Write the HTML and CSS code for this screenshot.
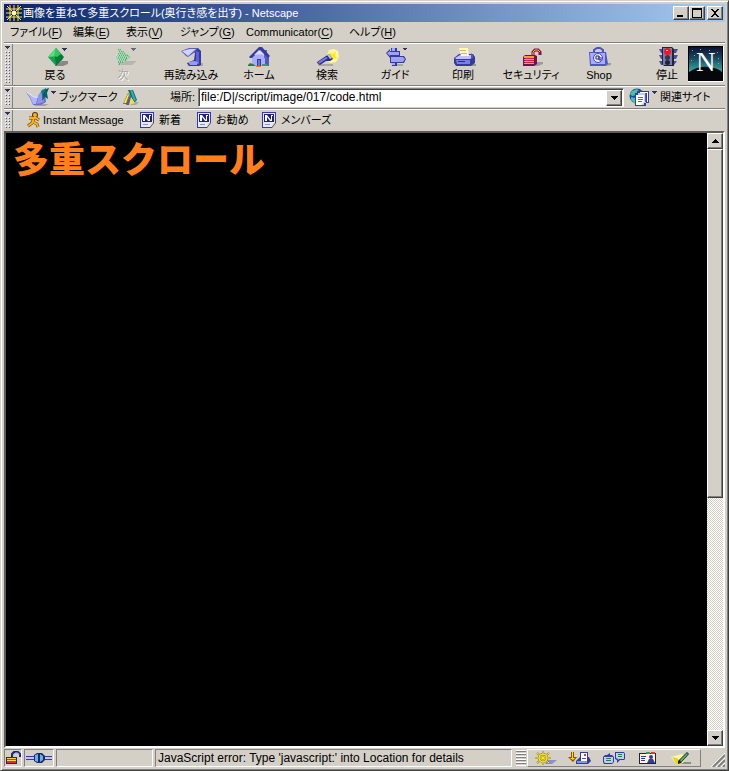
FILE: index.html
```html
<!DOCTYPE html>
<html lang="ja">
<head>
<meta charset="utf-8">
<meta name="viewport" content="width=device-width, initial-scale=1">
<title>画像を重ねて多重スクロール(奥行き感を出す) - Netscape</title>
<link rel="stylesheet" href="styles.css">
</head>
<body>
<svg class="defs" aria-hidden="true">
  <symbol id="page" viewBox="0 0 14 16"><path d="M0 0h14v11l-4 5H0z" fill="#3438b8"/><path d="M1 1h12v10h-3v4H1z" fill="#e8e8ff"/><path d="M2 2h10v8H2z" fill="#20246c"/><path d="M3 9V3h2l4 5V3h2v1h-1v5H8L5 5v4z" fill="#fff"/><path d="M3 12h5v1H3z" fill="#8890d8"/><path d="M10 11h3l-3 4z" fill="#ffe87c"/></symbol>
  <symbol id="drop" viewBox="0 0 5 3"><path d="M0 0h5v1H4v1H3v1H2V2H1V1H0z" fill="#303060"/></symbol>
</svg>
<div class="window">
  <header class="titlebar">
    <svg class="app-icon" viewBox="0 0 16 16"><path d="M0 0h16v16H0z" fill="#101858"/><path d="M8 0v16M0 8h16M1 1l14 14M15 1L1 15M0 4h16M0 12h16M4 0v16M12 0v16" stroke="#ffe94a"/><path d="M7 6h2v1h1v2H9v1H7V9H6V7h1z" fill="#fffbd0"/></svg>
    <h1 class="title">画像を重ねて多重スクロール(奥行き感を出す) - Netscape</h1>
    <div class="controls">
      <button class="box" aria-label="最小化"><svg viewBox="0 0 12 10"><path d="M2 7h6v2H2z"/></svg></button>
      <button class="box" aria-label="最大化"><svg viewBox="0 0 12 10"><path d="M1 0h10v10H1zM2 2v7h8V2z" fill-rule="evenodd"/></svg></button>
      <button class="box close" aria-label="閉じる"><svg viewBox="0 0 12 10"><path d="M2 1h2v1h1v1h2V2h1V1h2v1H9v1H8v1H7v2h1v1h1v1h1v1H8V8H7V7H5v1H4v1H2V8h1V7h1V6h1V4H4V3H3V2H2z"/></svg></button>
    </div>
  </header>

  <nav class="menu">
    <button>ファイル(<u>F</u>)</button>
    <button>編集(<u>E</u>)</button>
    <button>表示(<u>V</u>)</button>
    <button>ジャンプ(<u>G</u>)</button>
    <button>Communicator(<u>C</u>)</button>
    <button>ヘルプ(<u>H</u>)</button>
  </nav>

  <div class="bar navigation">
    <button class="grip" aria-label="ツールバー"><svg><use href="#drop"/></svg></button>
    <div class="tools">
      <button class="tool"><svg viewBox="0 0 24 20"><path d="M12 18l7-4h6v3l-5 2h-8z" fill="#8a8884"/><path d="M13 1v18L5 10z" fill="#18a050"/><path d="M13 1l2 8-10 1z" fill="#58e078"/><path d="M13 1l8 9-2 3-6 6-1-9z" fill="#087838"/><path d="M13 1l5 6-4 3-3-1z" fill="#30c860"/><path d="M19 1h5v1h-1v1h-1v1h-1V3h-1V2h-1z" fill="#303060"/></svg>戻る</button>
      <button class="tool disabled" disabled><svg viewBox="0 0 24 20"><path d="M9 18l5-4h12l-5 4z" fill="#b8b5ae"/><path d="M7 1l13 9-13 9 1-5-4-4 4-4z" fill="#8fd0a0"/><path d="M7 3h1m1 0h1M8 5h1m1 0h1m1 0h1M7 7h1m1 0h1m1 0h1m1 0h1M8 9h1m1 0h1m1 0h1m1 0h1m1 0h1M7 11h1m1 0h1m1 0h1m1 0h1m1 0h1M8 13h1m1 0h1m1 0h1m1 0h1M7 15h1m1 0h1m1 0h1M8 17h1" stroke="#1c8c4c"/><path d="M7 4h1m1 0h1M8 6h1m1 0h1m1 0h1M5 8h1m1 0h1m1 0h1m1 0h1m1 0h1M4 10h1m1 0h1m1 0h1m1 0h1m1 0h1m1 0h1m1 0h1M7 12h1m1 0h1m1 0h1m1 0h1M8 14h1m1 0h1m1 0h1" stroke="#e0eee0"/><path d="M20 1h5v1h-1v1h-1v1h-1V3h-1V2h-1z" fill="#686874"/></svg>次</button>
      <button class="tool"><svg viewBox="0 0 24 20"><path d="M8 16h16v3H9z" fill="#aaa7a0"/><path d="M10 1h9l3 3v14l-2 1H10l-2-3 7-3 1-7z" fill="#343b9c"/><path d="M17 4l3 1v12h-4l1-5z" fill="#5c62d8"/><path d="M2 4l8-3h9l-3 4-7 5-2-1z" fill="#5c62b8"/><path d="M3 4l8-2h6l-8 7z" fill="#d0d3ff"/><path d="M9 15l6-1 4 1-1 3h-7z" fill="#989cf4"/></svg>再読み込み</button>
      <button class="tool"><svg viewBox="0 0 24 20"><path d="M17 8h5v11h-6z" fill="#5358b8"/><path d="M5 10l6-6 7 6v9H5z" fill="#aaaefa"/><path d="M17 3h3v8h-3z" fill="#5d62c6"/><path d="M2 10L12 0h3l8 9-2 2-8-8-8 8H3z" fill="#343b9c"/><path d="M7 8l5-5 4 4z" fill="#d8daff"/><path d="M10 12h4v7h-4z" fill="#343b9c"/><path d="M11 13h2v6h-2z" fill="#696fe0"/><path d="M1 18l2-2 3 1 3 2H1z" fill="#168444"/><path d="M9 19h5v1H9z" fill="#e87530"/><path d="M15 17h4l3 2h-7z" fill="#36a060"/></svg>ホーム</button>
      <button class="tool"><svg viewBox="0 0 24 20"><path d="M12 8l2-5 5-1 4 2 1 6-3 5-6 1-4-3z" fill="#fff8a0"/><path d="M14 5l4 2 3-3-1 5 3 2-5 1-3 2z" fill="#ffe824"/><path d="M4 17h14v2H3z" fill="#aaa7a0"/><path d="M2 15l9-6 3-2 4 5-3 2h-4l-6 4-2-1z" fill="#292d80"/><path d="M3 15l8-5 2 1-9 6z" fill="#777de0"/><path d="M12 8l2-1 3 4-2 1z" fill="#b8bcff"/></svg>検索</button>
      <button class="tool"><svg viewBox="0 0 24 20"><path d="M9 17h11v2H9z" fill="#aaa7a0"/><path d="M8 1h6v18H9z" fill="#343b9c"/><path d="M9 1h3v17H9z" fill="#a5a9f5"/><path d="M3 6l4-4v2h10v5H7v2z" fill="#343b9c"/><path d="M4 6l3-2v1h9v3H7v1z" fill="#9da2f5"/><path d="M7 9h14l2 3-2 4H7z" fill="#343b9c"/><path d="M8 10h12l2 2-2 3H8z" fill="#9da2f5"/><path d="M20 1h4v1h-1v1h-2V2h-1z" fill="#303060"/></svg>ガイド</button>
      <button class="tool"><svg viewBox="0 0 24 20"><path d="M7 17h18v2H9z" fill="#99968f"/><path d="M3 11l5-4h14l2 3v6l-4 3H5l-2-3z" fill="#343b9c"/><path d="M4 11l5-3h11l2 2-3 2H5z" fill="#bfc2ff"/><path d="M5 13h14v4H6z" fill="#7a80e2"/><path d="M8 1h9l1 8H10z" fill="#fff9cf"/><path d="M9 3h6v1H9zm1 3h6v1h-6z" fill="#dfb060"/><path d="M20 6l2 2v3l-2 1z" fill="#5157b8"/><path d="M7 14h7v1H7z" fill="#252a80"/></svg>印刷</button>
      <button class="tool"><svg viewBox="0 0 24 20"><path d="M15 15h9v2l-5 2h-5z" fill="#9e9b94"/><path d="M14 9V5l2-2h3l2 2v3" fill="none" stroke="#7d1740" stroke-width="3"/><path d="M14 8V5l2-2h3l2 2" fill="none" stroke="#ffb050"/><path d="M4 10l2-2h10l2 1v8l-3 2H4z" fill="#69164c"/><path d="M5 9h10v2H5zm0 3h10v1H5zm0 2h10v1H5zm0 2h10v1H5z" fill="#ff9b39"/><path d="M6 11h9v1H6zm0 2h9v1H6zm0 2h9v1H6z" fill="#c72452"/></svg>セキュリティ</button>
      <button class="tool"><svg viewBox="0 0 24 20"><path d="M7 16h17v2l-5 1H6z" fill="#9e9b94"/><path d="M7 6V3l3-2h3l3 2v4" fill="none" stroke="#4b52c0" stroke-width="2"/><path d="M2 5h17l2 12-3 2H3z" fill="#5057c4"/><path d="M3 6h15v11H4z" fill="#a8adff"/><circle cx="11" cy="11" r="4.5" fill="#eeeeff" stroke="#4148b4"/><path d="M12 9H9v3h3V9v4h2v-3" fill="none" stroke="#292d80"/></svg>Shop</button>
      <button class="tool stop"><svg viewBox="0 0 24 20"><path d="M4 2h5v4H6zM4 8h5v4H6zM4 14h5v4H6zM17 2h6l-2 4h-4zM17 8h6l-2 4h-4zM17 14h5l-3 4h-2z" fill="#4a5096"/><path d="M7 0h10l2 2v17H9l-2-2z" fill="#20233c"/><path d="M8 1h9v17H8z" fill="#777cae"/><circle cx="12.500" cy="4.500" r="3.500" fill="#f01820"/><path d="M11 3h2v1h-2z" fill="#ffabab"/><circle cx="12.500" cy="10.500" r="2.500" fill="#33364c"/><circle cx="12.500" cy="15.500" r="2.500" fill="#202337"/></svg>停止</button>
    </div>
    <a class="logo" href="#" aria-label="Netscape"><svg viewBox="0 0 36 36"><defs><linearGradient id="sky" x2="0" y2="1"><stop offset="0" stop-color="#0c1030"/><stop offset=".35" stop-color="#1a4a60"/><stop offset=".75" stop-color="#3aaca4"/></linearGradient></defs><path d="M0 0h36v36H0z"/><path d="M1 1h33v33H1z" fill="url(#sky)"/><path d="M1 26Q10 20 20 21T34 26v8H1z" fill="#05070c"/><path d="M4 4h1v1H4zm25 2h1v1h-1zM6 9h1v1H6zm24 3h1v1h-1zM21 4h1v1h-1zM3 14h1v1H3zm27 3h1v1h-1zM12 3h1v1h-1z" fill="#7fa8b8"/><text x="8" y="25" class="logo-letter">N</text><path d="M35 0h1v36H0v-1h35z" fill="#fff"/></svg></a>
  </div>

  <div class="bar location">
    <button class="grip" aria-label="ツールバー"><svg><use href="#drop"/></svg></button>
    <button class="bookmark"><svg class="i24" viewBox="0 0 24 18"><path d="M8 16h15l-4 2H9z" fill="#a5a29b"/><path d="M0 4l7 4h5l5-7 2 3 1 10-5 3H7l-3-7z" fill="#6a70cc"/><path d="M0 4l7 4h5l-2 8H7l-3-7z" fill="#b0b4fa"/><path d="M12 8l4-6 2 12-7 2z" fill="#9094ec"/><path d="M15 3l5-3v6l-3 5z" fill="#087f76"/><path d="M20 1l3-1-2 5 1 6-3-2-3 4 1-7z" fill="#0a5c70"/><path d="M1 4l7 5h4" fill="none" stroke="#f0f0ff"/></svg><svg class="drop"><use href="#drop"/></svg>ブックマーク</button>
    <button class="quick" aria-label="クイックファイル"><svg viewBox="0 0 16 18"><path d="M5 14h11l-3 3H5z" fill="#aaa7a0"/><path d="M5 2h5l4 10-3 3-3-6z" fill="#086c79"/><path d="M7 2h2l4 10-2 1z" fill="#38b0a0"/><path d="M5 5l2 2-3 9H0z" fill="#7a7408"/><path d="M5 6l1 1-3 8H1z" fill="#fff04a"/><path d="M7 7l2 2-3 8H3z" fill="#5157b8"/><path d="M8 9l4 6-6 2z" fill="#f3df44"/></svg></button>
    <label for="address">場所:</label>
    <div class="combo"><input id="address" type="text" value="file:/D|/script/image/017/code.html"><button class="box" aria-label="履歴"><svg viewBox="0 0 7 4"><path d="M0 0h7v1H6v1H5v1H4v1H3V3H2V2H1V1H0z"/></svg></button></div>
    <button class="related"><svg class="i22" viewBox="0 0 22 18"><circle cx="8" cy="8" r="7.500" fill="#1748b8"/><path d="M3 3l5-2 2 2-3 4-4 1-2-2zM2 9l4 1 2 4-2 2-4-4zM12 2l3 4-4 1z" fill="#46c49c"/><path d="M8 3h12v12h-3v3H6V5h2z" fill="#373d91"/><path d="M11 4h8v10h-1V5h-7z" fill="#fff"/><path d="M9 5h8v10H9zM7 7h8v10H7z" fill="#c5c8f2"/><path d="M7 7h8v7l-3 3H7z" fill="#fff"/><path d="M9 9h5v1H9zm0 2h5v1H9zm0 2h4v1H9zM16 5h1v9h-1z" fill="#5a60ba"/></svg><svg class="drop"><use href="#drop"/></svg>関連サイト</button>
  </div>

  <div class="bar personal">
    <button class="grip" aria-label="ツールバー"><svg><use href="#drop"/></svg></button>
    <div class="links">
      <a class="aim" href="#"><svg viewBox="0 0 14 16"><path d="M2 6h7l3 2M7 6l-2 5-4 3M6 10l4 2 1 3" fill="none" stroke="#5c3400" stroke-width="3"/><circle cx="8" cy="3" r="3" fill="#5c3400"/><circle cx="8" cy="3" r="2" fill="#f9b024"/><path d="M2 6h7l3 2M7 6l-2 5-4 3M6 10l4 2 1 3" fill="none" stroke="#f9b024" stroke-width="2"/></svg>Instant Message</a>
      <a href="#"><svg><use href="#page"/></svg>新着</a>
      <a href="#"><svg><use href="#page"/></svg>お勧め</a>
      <a href="#"><svg><use href="#page"/></svg>メンバーズ</a>
    </div>
  </div>

  <div class="view">
    <main><h2>多重スクロール</h2></main>
    <div class="scrollbar">
      <button class="box" aria-label="上へ"><svg viewBox="0 0 7 4"><path d="M3 0h1v1h1v1h1v1h1v1H0V3h1V2h1V1h1z"/></svg></button>
      <div class="track"><div class="thumb"></div></div>
      <button class="box" aria-label="下へ"><svg viewBox="0 0 7 4"><path d="M0 0h7v1H6v1H5v1H4v1H3V3H2V2H1V1H0z"/></svg></button>
    </div>
  </div>

  <footer class="status">
    <button class="cell lock" aria-label="セキュリティ情報"><svg viewBox="0 0 16 14"><path d="M7 7V3l2-2h4l2 2v3" fill="none" stroke="#20266c" stroke-width="2"/><path d="M8 5l2-3h3l1 2" fill="none" stroke="#a5a9f5"/><path d="M1 6h11v7H1z" fill="#38205c"/><path d="M2 7h9v5H2z" fill="#ffd34b"/><path d="M2 8h9v1H2zm0 2h9v2H2z" fill="#d8285b"/></svg></button>
    <div class="cell plug"><svg viewBox="0 0 26 12"><path d="M0 4h8v4H0zM18 4h8v4h-8z" fill="#343b9c"/><path d="M0 5h8v2H0zM18 5h8v2h-8z" fill="#bfc2ff"/><path d="M8 3l3-2h5l3 3v4l-3 3h-5L8 9z" fill="#20266c"/><path d="M9 3l3-1v8l-3-1zM14 2l3 2v4l-3 2z" fill="#67aef3"/></svg></div>
    <div class="cell progress"></div>
    <div class="cell message">JavaScript error: Type 'javascript:' into Location for details</div>
    <div class="component-grip"></div>
    <div class="components">
      <button aria-label="Navigator"><svg viewBox="0 0 24 14"><path d="M13 9h10l-5 4h-7z" fill="#8b90cc"/><path d="M9 0v14M1 7h16M3 2l12 10M15 2L3 12" stroke="#8c8420" stroke-width="2"/><circle cx="9" cy="7" r="4" fill="none" stroke="#8c8420" stroke-width="2"/><path d="M9 0v14M1 7h16M3 2l12 10M15 2L3 12" stroke="#ffe43a"/><circle cx="9" cy="7" r="4" fill="none" stroke="#ffe43a"/></svg></button>
      <button aria-label="Mail"><svg viewBox="0 0 24 14"><path d="M3 1h3v5h3l-4 5-5-5h3z" fill="#8a5400"/><path d="M4 1h1v6h2L5 9 2 7h2z" fill="#ffdc24"/><path d="M8 10l4-4h9l2 4-3 3H8z" fill="#343b9c"/><path d="M9 10h10v2H9z" fill="#8c90ed"/><path d="M12 1h8v9h-8z" fill="#343b9c"/><path d="M13 2h6v8h-6z" fill="#fff"/><path d="M16 3h2v2h-2z" fill="#e33333"/><path d="M14 7h4v1h-4z" fill="#5157b8"/></svg></button>
      <button aria-label="Discussions"><svg viewBox="0 0 24 14"><path d="M1 6l2-2h2l3-2v2h2l2 2v5l-2 2H2l-1-2zM13 1h9l1 2v5l-1 1h-4l-3 3V9l-2-1z" fill="#343b9c"/><path d="M2 6h9v5l-1 1H3l-1-1zM14 2h8v6h-5l-1 1V8l-2-1z" fill="#c6c9ff"/><path d="M4 7h5v1H4zm0 2h5v1H4zm12-6h4v1h-4zm0 2h4v1h-4z" fill="#168444"/></svg></button>
      <button aria-label="Address Book"><svg viewBox="0 0 24 14"><path d="M3 2h17v11H3z" fill="#202040"/><path d="M4 3h15v9H4z" fill="#fff8cf"/><path d="M10 1h4v2h-4z" fill="#24a45c"/><path d="M15 1h4v2h-4z" fill="#e33333"/><path d="M5 5h5v1H5zm0 2h4v1H5zm0 2h4v1H5z" fill="#343b9c"/><circle cx="15" cy="6" r="2" fill="#343b9c"/><path d="M11 12l2-4h4l2 4z" fill="#343b9c"/></svg></button>
      <button aria-label="Composer"><svg viewBox="0 0 24 14"><path d="M7 11h14v2H8z" fill="#8e8c86"/><path d="M1 6l11-3 4 3-3 6-6 2z" fill="#fff9a7"/><path d="M2 6l5 1 5 5-5 2z" fill="#e7d32c"/><path d="M8 10l9-9 2 2-8 9-3 1z" fill="#202020"/><path d="M10 9l7-7 1 1-7 8z" fill="#58b674"/></svg></button>
    </div>
    <svg class="resize" viewBox="0 0 14 14"><path d="M0 14L14 0M5 14l9-9M10 14l4-4" stroke="#fff"/><path d="M2 14L14 2M7 14l7-7M12 14l2-2" stroke="#808080" stroke-width="2"/></svg>
  </footer>
</div>
</body>
</html>
```
FILE: styles.css
```css
:root {
  --face: #d4d0c8;
  --shade: #808080;
  --dark: #404040;
}

* { box-sizing: border-box; }

body {
  margin: 0;
  font: 11px/14px "Liberation Sans", "Noto Sans CJK JP", sans-serif;
  font-feature-settings: "palt";
  color: #000;
  background: var(--face);
}

button {
  display: flex;
  align-items: center;
  margin: 0;
  padding: 0;
  border: 0;
  background: none;
  color: inherit;
  font: inherit;
  font-feature-settings: inherit;
  white-space: nowrap;
}

a { color: inherit; text-decoration: none; }
svg { display: block; flex: none; overflow: visible; }
.defs { position: absolute; width: 0; height: 0; }

.window {
  display: flex;
  flex-direction: column;
  height: 100vh;
  padding: 3px;
  border: 1px solid;
  border-color: var(--face) var(--dark) var(--dark) var(--face);
  box-shadow: inset 1px 1px #fff, inset -1px -1px var(--shade);
}

.box {
  justify-content: center;
  width: 16px;
  height: 16px;
  flex: none;
  background: var(--face);
  border: 1px solid;
  border-color: #fff var(--dark) var(--dark) #fff;
  box-shadow: inset -1px -1px var(--shade);
}
.box svg { width: 7px; height: 4px; }

/* Title bar */
.titlebar {
  display: flex;
  align-items: center;
  flex: none;
  height: 18px;
  padding: 0 2px;
  color: #fff;
  background: linear-gradient(to right, #0a246a, #a6caf0);
}
.app-icon { width: 16px; height: 16px; }
.title {
  flex: 1;
  margin: 0 0 0 1px;
  font-size: 11px;
  font-weight: normal;
  white-space: nowrap;
  overflow: hidden;
}
.controls { display: flex; }
.controls .box { height: 14px; }
.controls .close { margin-left: 2px; }
.controls svg { width: 12px; height: 10px; }

/* Menu */
.menu {
  display: grid;
  grid-template-columns: 63px 53px 54px 66px 103px auto;
  align-items: center;
  justify-content: start;
  flex: none;
  height: 20px;
  padding-left: 6px;
}
u { text-underline-offset: 2px; }

/* Toolbars */
.bar {
  display: flex;
  align-items: center;
  flex: none;
  height: 23px;
  border-top: 1px solid var(--shade);
  box-shadow: inset 0 1px #fff;
}
.grip {
  flex: none;
  flex-direction: column;
  align-self: stretch;
  align-items: flex-start;
  gap: 2px;
  width: 9px;
  margin-top: 1px;
  padding: 2px 1px;
  border-right: 1px solid var(--shade);
}
.grip::after {
  content: "";
  flex: 1;
  align-self: stretch;
  background:
    conic-gradient(from 0deg at 2px 2px, transparent 75%, #54549c 0) 1px 1px / 3px 3px,
    conic-gradient(from 0deg at 1px 1px, transparent 75%, #fff 0) 0 0 / 3px 3px;
  background:
    conic-gradient(from 0deg at 1px 1px, transparent 75%, #54549c 0) 1px 1px / 3px 3px,
    conic-gradient(from 0deg at 1px 1px, transparent 75%, #fff 0) 0 0 / 3px 3px;
}
.grip svg, .drop { width: 5px; height: 3px; }

.navigation { height: 43px; }
.tools { display: flex; flex: 1; padding-left: 8px; }
.tool { flex-direction: column; width: 68px; gap: 1px; padding-top: 1px; }
.tool svg { width: 24px; height: 20px; }
.stop { width: 40px; margin-left: 14px; }
.disabled { color: #a5a29b; text-shadow: 1px 1px #fff; }
.logo { margin-right: 1px; }
.logo svg { width: 36px; height: 36px; }
.logo-letter { font: 27px "Liberation Serif", serif; fill: #fff; }

.i24 { width: 24px; height: 18px; }
.i22 { width: 22px; height: 18px; }
.bookmark { width: 97px; flex: none; margin-left: 13px; }
.drop { align-self: flex-start; margin: 3px 3px 0 1px; }
.quick svg { width: 16px; height: 18px; }
.location label { width: 59px; padding-right: 3px; text-align: right; white-space: nowrap; }
.combo {
  display: flex;
  flex: 1;
  height: 19px;
  min-width: 0;
  background: #fff;
  border: 1px solid;
  border-color: var(--shade) #fff #fff var(--shade);
  box-shadow: inset 1px 1px var(--dark);
  padding: 1px;
}
.combo input {
  flex: 1;
  min-width: 0;
  padding: 0 0 0 1px;
  border: 0;
  outline: 0;
  background: none;
  color: #000;
  font: inherit;
  font-size: 12px;
}
.related { width: 96px; margin-left: 5px; }

.links {
  display: grid;
  grid-template-columns: 113px 57px 65px auto;
  margin-left: 14px;
}
.links a { display: flex; align-items: center; gap: 5px; }
.links svg { width: 14px; height: 16px; }
.links .aim { gap: 2px; }

/* Page */
.view {
  display: flex;
  flex: 1;
  min-height: 0;
  border: 2px solid;
  border-color: #5c5c5c #fff #fff #5c5c5c;
}
main { flex: 1; min-width: 0; padding: 0 7px; background: #000; }
h2 {
  margin: 0;
  color: #ff7f1e;
  font: 900 36px/48px "Noto Sans CJK JP", sans-serif;
  font-feature-settings: normal;
}

.scrollbar { display: flex; flex-direction: column; flex: none; width: 16px; }
.track {
  flex: 1;
  background: repeating-conic-gradient(#fff 0 25%, var(--face) 0 50%) 0 0 / 2px 2px;
}
.thumb {
  height: 60%;
  background: var(--face);
  border: 1px solid;
  border-color: #fff var(--dark) var(--dark) #fff;
  box-shadow: inset -1px -1px var(--shade);
}

/* Status */
.status { display: flex; flex: none; height: 18px; margin-top: 1px; }
.cell {
  display: flex;
  align-items: center;
  justify-content: center;
  flex: none;
  margin-right: 2px;
  border: 1px solid;
  border-color: var(--shade) #fff #fff var(--shade);
}
.lock { width: 18px; }
.lock svg { width: 16px; height: 14px; }
.plug { width: 30px; }
.plug svg { width: 26px; height: 12px; }
.progress { width: 97px; }
.message {
  flex: 1;
  min-width: 0;
  justify-content: flex-start;
  padding-left: 2px;
  font-size: 12px;
  white-space: nowrap;
  overflow: hidden;
}
.component-grip {
  width: 10px;
  margin: 1px 1px 1px 2px;
  background: repeating-linear-gradient(#fff 0 1px, var(--shade) 1px 2px, var(--face) 2px 3px);
}
.components {
  display: flex;
  justify-content: space-between;
  flex: none;
  width: 174px;
  padding: 0 6px;
  border: 1px solid;
  border-color: #fff var(--shade) var(--shade) #fff;
}
.components svg { width: 24px; height: 14px; }
.resize { align-self: flex-end; width: 14px; height: 14px; margin-left: 10px; overflow: hidden; }
```
